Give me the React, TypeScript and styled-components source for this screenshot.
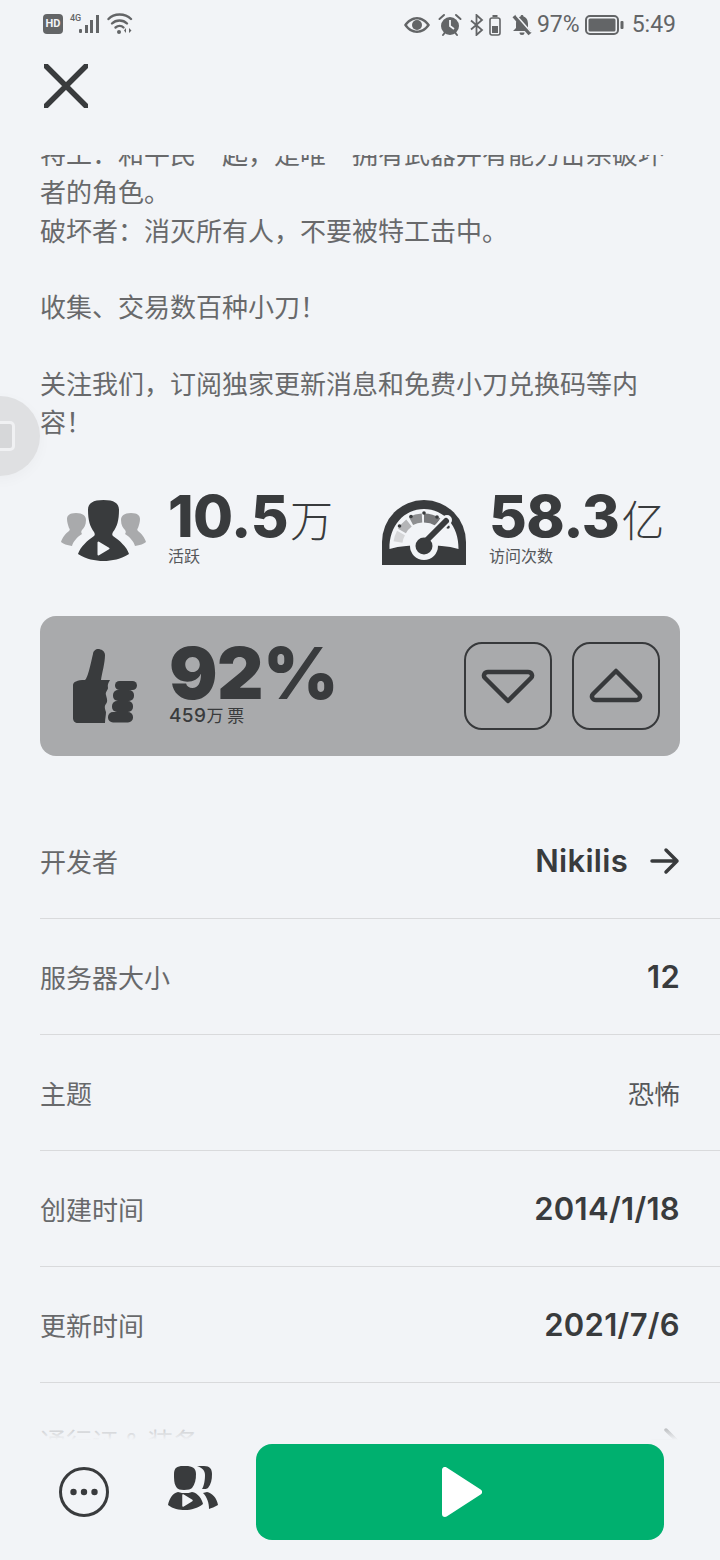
import React from "react";
import styled, { createGlobalStyle } from "styled-components";

const ink = "#393b3d";
const cjk = `"Noto Sans CJK SC", sans-serif`;
const latin = `Inter, "Noto Sans CJK SC", sans-serif`;

const Global = createGlobalStyle`
  html, body { margin: 0; padding: 0; background: #f2f4f7; }
  * { box-sizing: border-box; }
`;
const Page = styled.div`
  position: relative; width: 720px; height: 1560px; overflow: hidden;
  display: flex; flex-direction: column; background: #f2f4f7; font-family: ${cjk}; color: ${ink};
`;
const StatusBar = styled.div`
  height: 44px; flex: none; padding: 10px 44px 0 43px; display: flex; justify-content: space-between; align-items: flex-start; color: #636567;
`;
const StatusGroup = styled.div`
  display: flex; align-items: center; height: 30px; gap: ${(p: { $gap: number }) => p.$gap}px;
`;
const HdBadge = styled.span`
  width: 20px; height: 20px; border-radius: 4px; background: #636567; color: #f2f4f7;
  font: 700 11px/20px Roboto, sans-serif; text-align: center; margin-top: -2px;
`;
const NetLabel = styled.span`
  font: 500 9px/10px Roboto, sans-serif; align-self: flex-start; margin: 3px -4px 0 1px; width: 12px;
`;
const StatusText = styled.span`
  font: 400 23px/30px Roboto, sans-serif; color: #636567;
`;
const Header = styled.div`
  height: 111px; flex: none; padding: 20px 0 0 44px;
`;
const Scroller = styled.div`
  flex: 1; min-height: 0; overflow: hidden; position: relative;
`;
const Content = styled.div`
  margin-top: -21px; padding-left: 40px;
`;
const Description = styled.p`
  margin: 0; padding-right: 40px; font-size: 26px; line-height: 38.3px; color: #68696b; white-space: pre-wrap; height: 306px;
`;
const StatsRow = styled.div`
  display: flex; margin-top: 51px; height: 75px; padding-left: 20px;
`;
const Stat = styled.div`
  display: flex; align-items: flex-start; width: ${(p: { $w: number }) => p.$w}px; gap: ${(p: { $gap: number; $w: number }) => p.$gap}px;
`;
const StatText = styled.div`
  display: flex; flex-direction: column;
`;
const StatValue = styled.div`
  display: flex; align-items: baseline; height: 53px; line-height: 50px; font-family: ${latin}; font-size: 58px; font-weight: 800; letter-spacing: -0.5px;
`;
const StatUnit = styled.span`
  font-family: ${cjk}; font-weight: 300; font-size: 43px; letter-spacing: 0; margin-left: 2px;
`;
const StatLabel = styled.div`
  font-size: 16px; line-height: 20px; color: #55575a; margin-top: 1px;
`;
const VoteCard = styled.div`
  width: 640px; height: 140px; margin-top: 50px; background: #a9aaac; border-radius: 16px;
  display: flex; align-items: center; padding: 0 20px 0 32px;
`;
const Percent = styled.div`
  display: flex; flex-direction: column; margin-left: 31px; flex: 1; margin-top: -4px;
`;
const PercentValue = styled.div`
  font-family: ${latin}; font-size: 72px; line-height: 62px; font-weight: 900; height: 62px; letter-spacing: -0.5px;
`;
const VoteCount = styled.div`
  font-family: ${latin}; font-size: 19px; line-height: 22px; font-weight: 500; letter-spacing: 0.4px;
  span { font-family: ${cjk}; font-size: 17px; font-weight: 400; letter-spacing: 0; }
`;
const VoteButton = styled.button`
  width: 88px; height: 88px; padding: 0; border: 2px solid #37393b; border-radius: 18px; background: transparent;
  display: flex; align-items: center; justify-content: center; margin-left: 20px; flex: none;
`;
const InfoList = styled.div`
  margin-top: 47px;
`;
const Row = styled.div`
  height: 116px; display: flex; align-items: center; justify-content: space-between;
  padding: 0 40px 0 0; border-bottom: 1px solid #d9dadc;
`;
const RowLabel = styled.span`
  font-size: 26px; color: #68696b;
`;
const RowValue = styled.span`
  font-family: ${latin}; font-size: 31px; font-weight: 600; color: ${ink}; letter-spacing: 0.3px;
  display: flex; align-items: center; gap: 22px;
`;
const RowValueCjk = styled.span`
  font-size: 26px; color: #55575a;
`;
const Fade = styled.div`
  position: absolute; left: 0; right: 0; bottom: 0; height: 26px;
  background: linear-gradient(to bottom, rgba(242,244,247,0.35), #f2f4f7);
`;
const Footer = styled.div`
  flex: none; height: 120px; display: flex; align-items: flex-start; padding-top: 4px; position: relative;
`;
const IconSlot = styled.div`
  flex: none; display: flex; justify-content: center; align-items: center; height: 96px; width: ${(p: { $w: number }) => p.$w}px; margin-left: ${(p: { $w: number; $ml: number }) => p.$ml}px;
`;
const PlayButton = styled.button`
  width: 408px; height: 96px; border: 0; border-radius: 16px; background: #00b06f; flex: none; margin-left: 38px;
  display: flex; align-items: center; justify-content: center; padding: 0;
`;
const FloatBall = styled.div`
  position: absolute; left: -40px; top: 396px; width: 80px; height: 80px; border-radius: 50%; background: #dfe0e2;
  box-shadow: 0 4px 14px rgba(0,0,0,0.03);
`;
const FloatSquare = styled.div`
  position: absolute; right: 25px; top: 25px; width: 30px; height: 30px; border: 3px solid #f0f1f3; border-radius: 5px; background: #d6d7d9;
`;

const PeopleIcon = () => (
  <svg width="87" height="62" viewBox="0 0 87 62">
    <g fill="#a9aaac">
      <path d="M7 19c0-3 2-6 9-6s10 3 10 7c0 5-2 8-4 10 -1 1-1 3 0 4-5 3-9 8-10 12 -5-1-9-2-11-4 1-4 5-9 8-11 1-1 1-2 0-3-1-3-2-6-2-9z" />
      <path d="M80 19c0-3-2-6-9-6s-10 3-10 7c0 5 2 8 4 10 1 1 1 3 0 4 5 3 9 8 10 12 5-1 9-2 11-4-1-4-5-9-8-11-1-1-1-2 0-3 1-3 2-6 2-9z" />
    </g>
    <path fill={ink} d="M28 10C28 3 33 0 43.500 0S59 3 59 10c0 10-2 17-6 22-1 2-1 3 0 4 6 4 14 11 16 18-8 5-17 7-25.500 7S26 59 18 54c2-7 10-14 16-18 1-1 1-2 0-4-4-5-6-12-6-22z" />
    <path fill="#f2f4f7" stroke="#f2f4f7" strokeWidth="2" strokeLinejoin="round" d="M38.500 42.500v12l10-6z" />
  </svg>
);

const Gauge = () => (
  <svg width="84" height="66" viewBox="0 0 84 66">
    <path fill={ink} d="M0 66V43a42 42 0 0 1 84 0v23z" />
    <path fill="#f2f4f7" d="M7.500 50C7 27 22 10 42 10s35 17 34.500 40C66 47 54 46 42 46s-24 1-34.500 4z" />
    <g fill="none" strokeWidth="9">
      <path stroke="#d5d6d8" d="M16 43a27 27 0 0 1 3-9" />
      <path stroke="#b4b5b7" d="M20 32a27 27 0 0 1 7-8" />
      <path stroke="#8e8f91" d="M29 22a27 27 0 0 1 11-3" />
      <path stroke="#77787a" d="M42 19a27 27 0 0 1 14 4" />
    </g>
    <g fill={ink}>
      <circle cx="17.500" cy="27" r="1.800" /><circle cx="29" cy="17.500" r="1.800" /><circle cx="42" cy="14" r="1.800" />
      <circle cx="55" cy="18" r="1.800" /><circle cx="66" cy="28" r="1.800" />
    </g>
    <circle cx="42" cy="47" r="14" fill="#f2f4f7" />
    <path stroke="#f2f4f7" strokeWidth="10" strokeLinecap="round" d="M44 42 65 21" />
    <path stroke={ink} strokeWidth="6" strokeLinecap="round" d="M44 42 64 22" />
    <circle cx="42" cy="47" r="8.500" fill={ink} />
  </svg>
);

const Thumb = () => (
  <svg width="66" height="76" viewBox="0 0 66 76">
    <g fill={ink}>
      <path d="M26 1c3 0 7 2 7 6 0 8-3 18-4 25h9c-3 5-2 6-2 8s-3 4-2 7c1 4 2 6 0 9-2 2-1 5 0 8 0 3-1 7-1 11H6c-3 0-5-2-5-5V37c0-3 4-5 12-5 3-2 6-18 8-26 0-3 3-5 5-5z" />
      <rect x="43" y="33" width="22" height="9" rx="4.500" />
      <rect x="41" y="42" width="21" height="11" rx="5" />
      <rect x="40" y="53" width="21" height="11" rx="5" />
      <rect x="36" y="64" width="25" height="10.500" rx="5" />
    </g>
  </svg>
);

const Tri = ({ up }: { up?: boolean }) => (
  <svg width="54" height="36" viewBox="0 0 54 36">
    <path fill="none" stroke="#37393b" strokeWidth="4.500" strokeLinejoin="round"
      d={up ? "M27 3 50 26c2 2 1 6-3 6H7c-4 0-5-4-3-6z" : "M27 33 50 10c2-2 1-6-3-6H7C3 4 2 8 4 10z"} />
  </svg>
);

const Arrow = ({ color = ink }: { color?: string }) => (
  <svg width="30" height="28" viewBox="0 0 30 28">
    <path fill="none" stroke={color} strokeWidth="3.500" strokeLinecap="round" strokeLinejoin="round" d="M2 14h25M16 3l11 11-11 11" />
  </svg>
);

const App = () => (
  <Page>
    <Global />
    <StatusBar>
      <StatusGroup $gap={0}>
        <HdBadge>HD</HdBadge>
        <NetLabel style={{ marginLeft: 7 }}>4G</NetLabel>
        <svg width="24" height="20" viewBox="0 0 24 20" style={{ marginTop: -2 }}>
          <g fill="#636567">
            <rect x="1" y="15" width="3" height="4" rx="1" /><rect x="7" y="11" width="3" height="8" />
            <rect x="12" y="6" width="3" height="13" /><rect x="18" y="1" width="3" height="18" />
          </g>
        </svg>
        <svg width="26" height="22" viewBox="0 0 26 22" style={{ marginLeft: 5, marginTop: -2 }}>
          <g fill="none" stroke="#636567" strokeWidth="2.400" strokeLinecap="round">
            <path d="M1.500 6C7 0 18 0 24 6" /><path d="M5 10.500c4-4 11-4 15 0" /><path d="M8.500 14.500c2.500-2 6-2 8 0" />
          </g>
          <circle cx="12" cy="19" r="2" fill="#636567" />
          <path fill="#636567" d="M19 15v5l-2-2.500zM22 15v5l2.500-2.500z" />
        </svg>
      </StatusGroup>
      <StatusGroup $gap={5}>
        <svg width="26" height="18" viewBox="0 0 26 18" style={{ marginRight: 3 }}>
          <path fill="#636567" fillRule="evenodd" d="M0 9c3-5 8-8 13-8s10 3 13 8c-3 5-8 8-13 8S3 14 0 9zm3 0c2 3 6 5.500 10 5.500S21 12 23 9c-2-3-6-5.500-10-5.500S5 6 3 9z" />
          <circle cx="13" cy="9" r="5" fill="#636567" />
        </svg>
        <svg width="24" height="24" viewBox="0 0 24 24" style={{ marginRight: 3 }}>
          <circle cx="12" cy="13" r="9" fill="#636567" />
          <path stroke="#f2f4f7" strokeWidth="1.800" fill="none" d="M12 7v6l4 3" />
          <path stroke="#636567" strokeWidth="2" strokeLinecap="round" d="M1.500 6 6 2M22.500 6 18 2M5 22l2-2.500M19 22l-2-2.500" />
        </svg>
        <svg width="14" height="22" viewBox="0 0 14 22">
          <path fill="none" stroke="#636567" strokeWidth="1.800" d="M1 6.500 12 16l-5.500 5V1L12 6 1 15.500" />
        </svg>
        <svg width="12" height="22" viewBox="0 0 12 22" style={{ marginRight: 6 }}>
          <rect x="1" y="4" width="10" height="17" rx="2" fill="none" stroke="#636567" strokeWidth="1.600" />
          <rect x="3.500" y="1" width="5" height="2" fill="#636567" />
          <rect x="3" y="12" width="6" height="7" fill="#636567" />
        </svg>
        <svg width="20" height="22" viewBox="0 0 20 22" style={{ marginRight: 0 }}>
          <path fill="#636567" d="M10 1c1 0 1.500.7 1.500 1.500C15 3.500 16 7 16 10v4l3 3H1l3-3v-4c0-3 1-6.500 4.500-7.500C8.500 1.700 9 1 10 1zM7.500 18.500h5a2.500 2.500 0 0 1-5 0z" />
          <path stroke="#636567" strokeWidth="4" d="M2 2l16 18" />
          <path stroke="#f2f4f7" strokeWidth="1.500" d="M4 1l15 17" />
        </svg>
        <StatusText>97%</StatusText>
        <svg width="39" height="20" viewBox="0 0 39 20">
          <rect x="1" y="1" width="32" height="18" rx="4" fill="none" stroke="#636567" strokeWidth="2" />
          <rect x="3.500" y="3.500" width="27" height="13" rx="1.500" fill="#636567" />
          <rect x="35.500" y="6" width="3" height="8" rx="1" fill="#636567" />
        </svg>
        <StatusText style={{ marginLeft: 3 }}>5:49</StatusText>
      </StatusGroup>
    </StatusBar>
    <Header>
      <svg width="44" height="44" viewBox="0 0 44 44" style={{ display: "block" }}>
        <path stroke={ink} strokeWidth="5.500" strokeLinecap="round" d="M2.500 2.500l41 41M43.500 2.500l-41 41" transform="translate(-1 -1)" />
      </svg>
    </Header>
    <Scroller>
      <Content>
        <Description>{"特工：和平民一起，是唯一拥有武器并有能力击杀破坏者的角色。\n破坏者：消灭所有人，不要被特工击中。\n\n收集、交易数百种小刀！\n\n关注我们，订阅独家更新消息和免费小刀兑换码等内容！"}</Description>
        <StatsRow>
          <Stat $w={322} $gap={21}>
            <div style={{ marginTop: 9 }}><PeopleIcon /></div>
            <StatText>
              <StatValue>10.5<StatUnit>万</StatUnit></StatValue>
              <StatLabel>活跃</StatLabel>
            </StatText>
          </Stat>
          <Stat $w={300} $gap={23}>
            <div style={{ marginTop: 8 }}><Gauge /></div>
            <StatText>
              <StatValue>58.3<StatUnit>亿</StatUnit></StatValue>
              <StatLabel>访问次数</StatLabel>
            </StatText>
          </Stat>
        </StatsRow>
        <VoteCard>
          <Thumb />
          <Percent>
            <PercentValue>92%</PercentValue>
            <VoteCount>459<span>万 票</span></VoteCount>
          </Percent>
          <VoteButton><Tri /></VoteButton>
          <VoteButton><Tri up /></VoteButton>
        </VoteCard>
        <InfoList>
          <Row><RowLabel>开发者</RowLabel><RowValue>Nikilis <Arrow /></RowValue></Row>
          <Row><RowLabel>服务器大小</RowLabel><RowValue>12</RowValue></Row>
          <Row><RowLabel>主题</RowLabel><RowValueCjk>恐怖</RowValueCjk></Row>
          <Row><RowLabel>创建时间</RowLabel><RowValue>2014/1/18</RowValue></Row>
          <Row><RowLabel>更新时间</RowLabel><RowValue>2021/7/6</RowValue></Row>
          <Row><RowLabel>通行证 &amp; 装备</RowLabel><Arrow /></Row>
        </InfoList>
      </Content>
      <Fade />
    </Scroller>
    <Footer>
      <IconSlot $w={50} $ml={59}>
        <svg width="50" height="50" viewBox="0 0 50 50">
          <circle cx="25" cy="25" r="23.500" fill="none" stroke={ink} strokeWidth="3" />
          <g fill={ink}><circle cx="14.500" cy="25" r="3.200" /><circle cx="25" cy="25" r="3.200" /><circle cx="35.500" cy="25" r="3.200" /></g>
        </svg>
      </IconSlot>
      <IconSlot $w={50} $ml={59}>
        <svg width="50" height="46" viewBox="0 0 50 46" style={{ marginTop: -8 }}>
          <g fill={ink}>
            <path d="M29 1h7c6 0 8 3 8 8 0 6-1 10-4 14-1 1-3 1-6 1 2-3 3-9 3-14 0-4-2-7-8-9z" />
            <path d="M39 27c5 1 10 6 11 13-3 2-7 3-9 4 0-6-2-12-6-16z" />
            <path d="M6 9c0-6 3-8 9-8h3c6 0 10 2 10 8 0 6-1 10-4 14-1 1-4 2-8 2s-6-1-7-2C6 19 6 15 6 9z" />
            <path d="M10 27c3 1 5 1 7 1s5 0 7-1c6 1 10 7 11 12-5 4-12 6-18 6S5 44 0 40c1-5 4-12 10-13z" />
          </g>
          <path fill="#f2f4f7" stroke="#f2f4f7" strokeWidth="1.500" strokeLinejoin="round" d="M15 30v11l9-5.500z" />
        </svg>
      </IconSlot>
      <PlayButton>
        <svg width="40" height="50" viewBox="0 0 40 50" style={{ marginLeft: 4 }}>
          <path fill="#fff" stroke="#fff" strokeWidth="6" strokeLinejoin="round" d="M3 3v44l34-22z" />
        </svg>
      </PlayButton>
    </Footer>
    <FloatBall><FloatSquare /></FloatBall>
  </Page>
);

export default App;
